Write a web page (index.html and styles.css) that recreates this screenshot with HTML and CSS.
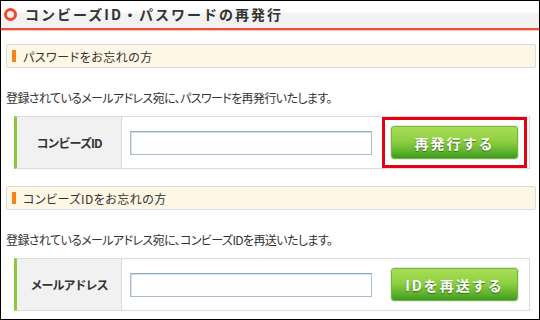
FILE: index.html
```html
<!DOCTYPE html>
<html lang="ja">
<head>
    <meta charset="UTF-8">
    <title>コンビーズID・パスワードの再発行</title>
    <link rel="stylesheet" href="styles.css">
</head>
<body>
    <div class="page">
        <h1 class="page-title"><span class="ring"></span>コンビーズID・パスワードの再発行</h1>

        <h2 class="section-head">パスワードをお忘れの方</h2>
        <p class="lead">登録されているメールアドレス宛に、パスワードを再発行いたします。</p>
        <div class="form-row">
            <div class="form-label">コンビーズID</div>
            <input class="text-input" type="text">
            <div class="form-action marked"><button class="btn-green">再発行する</button></div>
        </div>

        <h2 class="section-head second">コンビーズIDをお忘れの方</h2>
        <p class="lead">登録されているメールアドレス宛に、コンビーズIDを再送いたします。</p>
        <div class="form-row">
            <div class="form-label">メールアドレス</div>
            <input class="text-input" type="text">
            <div class="form-action"><button class="btn-green">IDを再送する</button></div>
        </div>
    </div>
</body>
</html>
```

FILE: styles.css
```css
*{margin:0;padding:0;box-sizing:border-box}
body{background:#fff;font-family:"Noto Sans CJK JP","Noto Sans",sans-serif;font-feature-settings:"palt";color:#333}
.page{width:540px;height:320px;border:1px solid #000;overflow:hidden}

/* title bar */
.page-title{display:flex;align-items:center;height:29px;padding:0 0 1px 3px;font-size:14px;font-weight:bold;letter-spacing:2px;font-feature-settings:normal;color:#333;background:linear-gradient(#fff 0,#fff 38%,#f2f2f2 48%,#f2f2f2 100%);border-bottom:2px solid #f04e3a;box-shadow:0 1px 0 #fbc3b8}
.ring{width:13px;height:13px;border:3px solid #ef4a2c;border-radius:50%;margin-right:8px;flex:none}

/* section */
.section-head{display:flex;align-items:center;height:24px;margin:14px 3px 0 5px;padding-left:5px;font-size:12px;font-weight:normal;letter-spacing:.5px;color:#333;background:#fef7e6;border:1px solid #dcdcdc;border-radius:2px}
.section-head::before{content:"";width:4px;height:12px;background:#f5821f;margin-right:7px}
.section-head.second{margin-top:17px}
.lead{margin:22px 0 0 5px;font-size:12px;line-height:16px;letter-spacing:-.6px;color:#333}

/* form row */
.form-row{display:flex;align-items:center;height:53px;margin:10px 9px 0 13px;border:1px solid #dcdcdc;border-left:3px solid #8dc63f}
.form-label{display:flex;align-items:center;justify-content:center;align-self:stretch;width:105px;background:#f1f1f1;border-right:1px dotted #c8c8c8;font-size:12px;font-weight:bold;letter-spacing:-1px;font-feature-settings:normal;color:#333}
.text-input{width:242px;height:24px;margin-left:8px;border:1px solid #a8bdd4;border-top-color:#8fa9c5;box-shadow:inset 1px 1px 0 #d5e0eb;background:#fff}
.form-action{margin-left:10px;padding:6px;border:3px solid transparent}
.form-action.marked{border-color:#e60012}
.btn-green{display:block;width:127px;height:33px;font-family:inherit;font-size:14px;font-weight:bold;letter-spacing:2px;color:#fff;text-shadow:0 1px 1px rgba(30,80,10,.7);background:linear-gradient(#a9dd55 0,#8fd043 45%,#5fb22c 80%,#3f9a22 100%);border:1px solid #74b448;border-radius:3px;box-shadow:0 0 0 1px #e2efd8;cursor:pointer}
```
